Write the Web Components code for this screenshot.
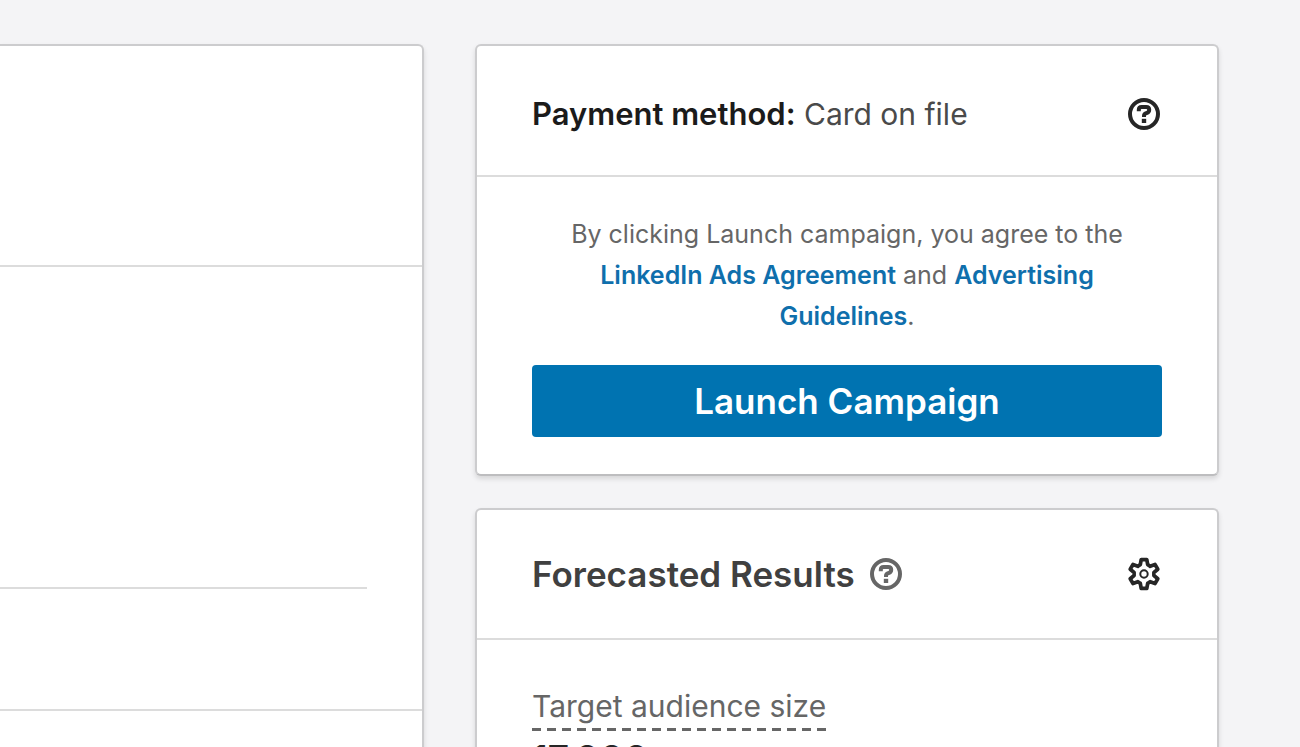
<!DOCTYPE html>
<html lang="en">
<head>
<meta charset="utf-8">
<title>Launch campaign</title>
<style>
html, body { height: 100%; }
body {
  margin: 0;
  overflow: hidden;
  background: #f4f4f6;
  font-family: Inter, "Liberation Sans", sans-serif;
}
</style>
</head>
<body>
<campaign-page>
  <section-stack slot="main"></section-stack>
  <panel-card slot="side" class="payment">
    <payment-heading slot="header"></payment-heading>
    <help-button slot="action" label="About payment method"></help-button>
    <launch-form></launch-form>
  </panel-card>
  <panel-card slot="side">
    <forecast-heading slot="header"></forecast-heading>
    <settings-button slot="action"></settings-button>
    <audience-size></audience-size>
  </panel-card>
</campaign-page>

<script>
function define(name, html) {
  const template = document.createElement('template');
  template.innerHTML = html;
  customElements.define(name, class extends HTMLElement {
    constructor() {
      super();
      this.attachShadow({ mode: 'open' }).append(template.content.cloneNode(true));
    }
    connectedCallback() {
      const label = this.getAttribute('label');
      const button = this.shadowRoot.querySelector('button');
      if (label && button) button.setAttribute('aria-label', label);
    }
  });
}

define('campaign-page', `
<style>
:host {
  display: grid;
  grid-template-columns: minmax(0, 1fr) minmax(0, 744px);
  column-gap: 51px;
  box-sizing: border-box;
  height: 100vh;
  overflow: hidden;
  padding: 44px 81px 0 0;
}
main, aside { display: grid; }
aside { gap: 32px; align-content: start; }
</style>
<main><slot name="main"></slot></main>
<aside><slot name="side"></slot></aside>`);

define('section-stack', `
<style>
:host {
  display: block;
  box-sizing: border-box;
  background: #fff;
  border: solid #ccccce;
  border-width: 2px 2px 0 0;
  border-radius: 0 6px 0 0;
  box-shadow: 0 3px 5px #0000001f;
}
section { box-sizing: border-box; border-bottom: 2px solid #dcdcdc; }
.first { height: 221px; }
.second { height: 444px; padding: 320px 55px 0 0; }
hr { margin: 0; border: 0; border-top: 2px solid #dcdcdc; }
</style>
<section class="first"></section>
<section class="second"><hr></section>`);

define('panel-card', `
<style>
:host {
  display: block;
  box-sizing: border-box;
  background: #fff;
  border: 2px solid #ccccce;
  border-bottom-color: #bdbdbf;
  border-radius: 6px;
  box-shadow: 0 3px 5px #0000001f;
}
header {
  display: flex;
  align-items: center;
  justify-content: space-between;
  box-sizing: border-box;
  height: 130px;
  padding: 0 56px 0 55px;
  border-bottom: 2px solid #dcdcdc;
}
:host(.payment) header { height: 131px; padding-top: 6px; }
.body { padding: 37px 55px; }
</style>
<header><slot name="header"></slot><slot name="action"></slot></header>
<div class="body"><slot></slot></div>`);

define('payment-heading', `
<style>
:host { display: block; font-size: 30px; line-height: 40px; color: #4a4a4a; white-space: nowrap; }
strong { font-size: 31px; font-weight: 600; color: #1b1b1b; }
</style>
<strong>Payment method:</strong> Card on file`);

define('forecast-heading', `
<style>
:host { display: flex; align-items: center; gap: 14px; color: #666; }
h2 { margin: 0; font-size: 35px; line-height: 44px; font-weight: 600; color: #404040; white-space: nowrap; }
</style>
<h2>Forecasted Results</h2><help-button label="About forecasted results"></help-button>`);

define('help-button', `
<style>
:host { display: block; color: #262626; }
:host-context(forecast-heading) { color: #666; }
button { display: block; padding: 0; border: 0; background: none; color: inherit; cursor: pointer; }
svg { display: block; }
</style>
<button type="button"><svg width="34" height="34" viewBox="0 0 34 34" fill="none" stroke="currentColor" aria-hidden="true">
<circle cx="17" cy="17" r="14" stroke-width="4"/>
<path d="M11.8 14.2v-1.4q0-2.8 2.8-2.8h4.6q3 0 3 2.8 0 2.3-2.1 3.1l-1.4.5q-1.7.7-1.7 2.6v.9" stroke-width="4"/>
<path d="M14.8 21.8h4.4V26h-4.4z" fill="currentColor" stroke="none"/>
</svg></button>`);

define('settings-button', `
<style>
:host { display: block; color: #262626; }
button { display: block; padding: 0; border: 0; background: none; color: inherit; cursor: pointer; }
svg { display: block; }
</style>
<button type="button" aria-label="Forecast settings"><svg width="34" height="34" viewBox="0 0 34 34" fill="none" stroke="currentColor" aria-hidden="true">
<path d="M14.2 2.7h5.6l.9 5q1.3.5 2.5 1.6l4.8-1.8 2.8 4.8-3.9 3.2v3l3.9 3.2-2.8 4.8-4.8-1.8q-1.2 1.1-2.5 1.6l-.9 5h-5.6l-.9-5q-1.3-.5-2.5-1.6L6 26.5l-2.8-4.8 3.9-3.2v-3l-3.9-3.2L6 7.5l4.8 1.8q1.2-1.1 2.5-1.6z" stroke-width="3.7" stroke-linejoin="round"/>
<circle cx="17" cy="17" r="3.7" stroke-width="2"/>
</svg></button>`);

define('launch-form', `
<style>
:host { display: block; }
p { margin: 0; padding: 0 30px; font-size: 25px; line-height: 41px; text-align: center; color: #666; }
a { color: #0f6fac; font-weight: 600; text-decoration: none; }
button {
  display: block;
  width: 100%;
  height: 72px;
  margin-top: 28px;
  padding: 0;
  border: 0;
  border-radius: 4px;
  background: #0073b1;
  color: #fff;
  font: 600 35px/44px Inter, "Liberation Sans", sans-serif;
  cursor: pointer;
}
</style>
<p>By clicking Launch campaign, you agree to the <a href="#ads-agreement">LinkedIn Ads Agreement</a> and <a href="#guidelines">Advertising Guidelines</a>.</p>
<button type="button">Launch Campaign</button>`);

define('audience-size', `
<style>
:host { display: block; }
dl { margin: 0; padding-top: 9px; }
dt {
  width: max-content;
  padding-bottom: 5px;
  font-size: 30px;
  line-height: 40px;
  color: #666;
  background: repeating-linear-gradient(90deg, #666 0 9px, transparent 9px 15px) bottom / 100% 3px no-repeat;
}
dd { margin: 6px 0 0; font-size: 37px; line-height: 44px; font-weight: 600; color: #262626; }
</style>
<dl><dt>Target audience size</dt><dd>17,000</dd></dl>`);
</script>
</body>
</html>
